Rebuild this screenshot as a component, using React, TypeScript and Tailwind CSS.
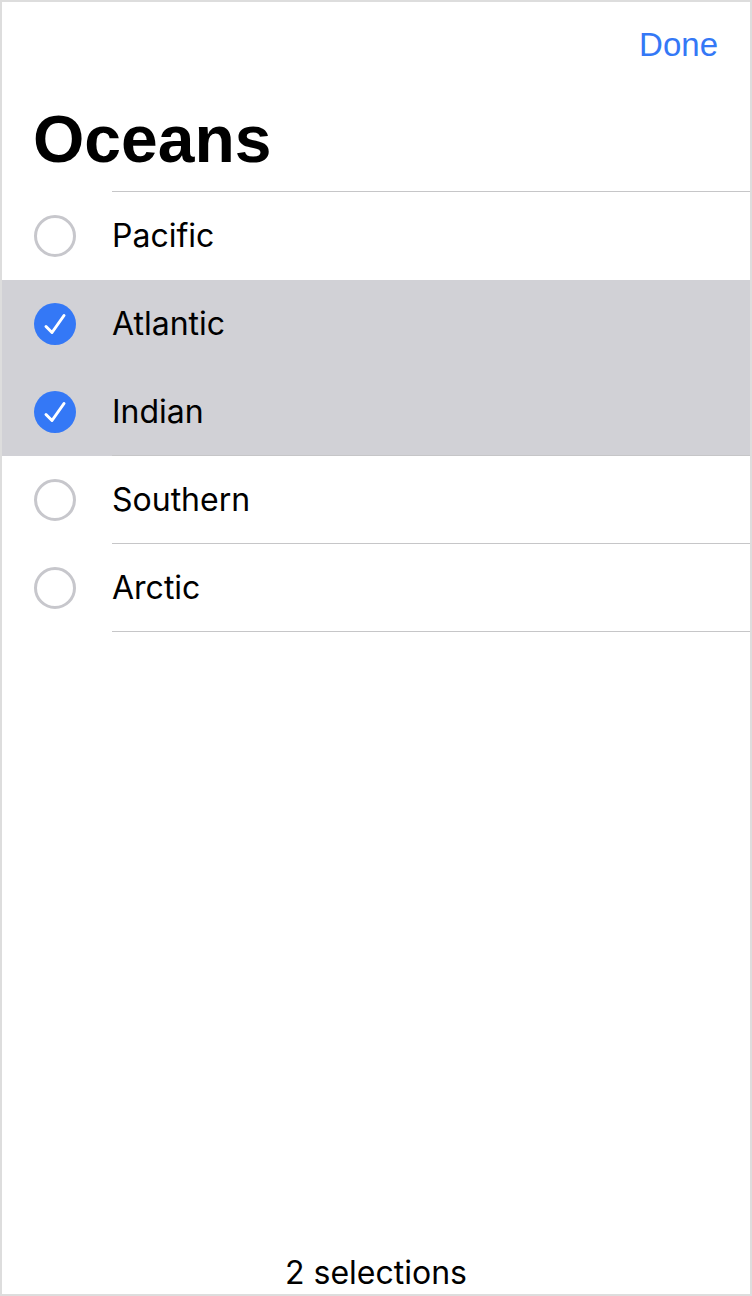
import React, { useState } from "react";

const oceans = ["Pacific", "Atlantic", "Indian", "Southern", "Arctic"];

function Check({ on }: { on: boolean }) {
  if (!on) {
    return (
      <span className="block w-[42px] h-[42px] shrink-0 rounded-full border-[3px] border-[#c7c7cc]" />
    );
  }
  return (
    <svg width="42" height="42" viewBox="0 0 42 42" className="shrink-0">
      <circle cx="21" cy="21" r="21" fill="#3478f6" />
      <path
        d="M12 23.5 L18 29.5 L30 12.5"
        fill="none"
        stroke="#fff"
        strokeWidth="3"
        strokeLinecap="round"
        strokeLinejoin="round"
      />
    </svg>
  );
}

export default function App() {
  const [selected, setSelected] = useState<string[]>(["Atlantic", "Indian"]);

  const toggle = (name: string) =>
    setSelected((s) =>
      s.includes(name) ? s.filter((x) => x !== name) : [...s, name],
    );

  return (
    <div className="w-[752px] h-[1296px] border-2 border-[#dddddd] bg-white flex flex-col font-['Inter',sans-serif] text-black">
      <div className="pt-[23px] pb-[14px] border-b border-[#c6c6c8] ml-[110px]">
        <div className="flex justify-end pr-[32px]">
          <button className="font-['Liberation_Sans',Arial,sans-serif] text-[33px] leading-[40px] text-[#3478f6]">
            Done
          </button>
        </div>
        <h1 className="-ml-[79px] mt-[36px] font-['Liberation_Sans',Arial,sans-serif] font-bold text-[66px] leading-[76px]">
          Oceans
        </h1>
      </div>
      <ul>
        {oceans.map((name, i) => {
          const on = selected.includes(name);
          const next = oceans[i + 1];
          const hideLine = next !== undefined && selected.includes(next);
          return (
            <li
              key={name}
              onClick={() => toggle(name)}
              className={`h-[88px] flex items-center pl-[32px] cursor-pointer ${on ? "bg-[#d1d1d6]" : "bg-white"}`}
            >
              <Check on={on} />
              <div
                className={`ml-[36px] flex-1 h-full flex items-center border-b ${hideLine ? "border-transparent" : "border-[#c6c6c8]"}`}
              >
                <span className="text-[32px] leading-[40px]">{name}</span>
              </div>
            </li>
          );
        })}
      </ul>
      <div className="flex-1" />
      <div className="pb-[2px] text-center text-[32px] leading-[38px]">
        {selected.length} selections
      </div>
    </div>
  );
}
